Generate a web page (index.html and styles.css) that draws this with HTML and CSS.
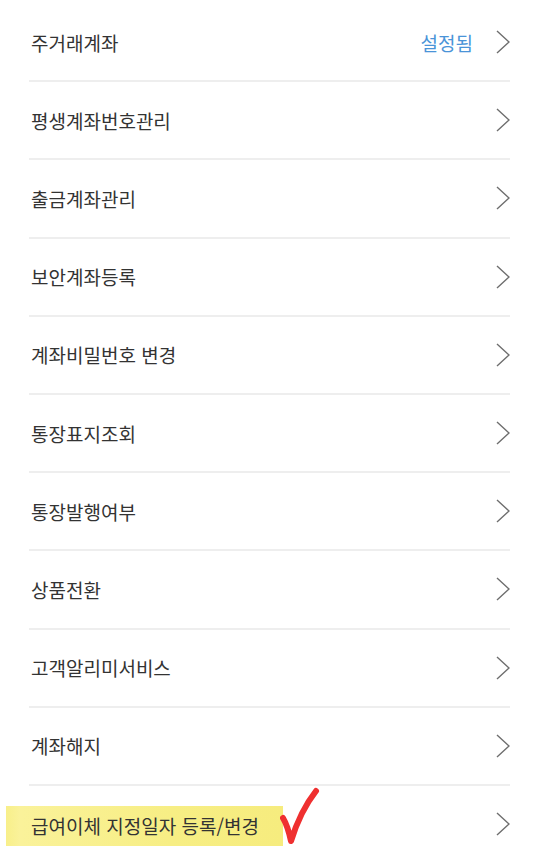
FILE: index.html
```html
<!DOCTYPE html>
<html lang="ko">
<head>
<meta charset="utf-8">
<link rel="stylesheet" href="styles.css">
</head>
<body>
<ul class="menu">
  <li class="row"><span class="label">주거래계좌</span><span class="right"><span class="status">설정됨</span><svg class="chev" viewBox="0 0 14 24"><path d="M1 1 L13 12 L1 23"/></svg></span></li>
  <li class="row"><span class="label">평생계좌번호관리</span><span class="right"><svg class="chev" viewBox="0 0 14 24"><path d="M1 1 L13 12 L1 23"/></svg></span></li>
  <li class="row"><span class="label">출금계좌관리</span><span class="right"><svg class="chev" viewBox="0 0 14 24"><path d="M1 1 L13 12 L1 23"/></svg></span></li>
  <li class="row"><span class="label">보안계좌등록</span><span class="right"><svg class="chev" viewBox="0 0 14 24"><path d="M1 1 L13 12 L1 23"/></svg></span></li>
  <li class="row"><span class="label">계좌비밀번호 변경</span><span class="right"><svg class="chev" viewBox="0 0 14 24"><path d="M1 1 L13 12 L1 23"/></svg></span></li>
  <li class="row"><span class="label">통장표지조회</span><span class="right"><svg class="chev" viewBox="0 0 14 24"><path d="M1 1 L13 12 L1 23"/></svg></span></li>
  <li class="row"><span class="label">통장발행여부</span><span class="right"><svg class="chev" viewBox="0 0 14 24"><path d="M1 1 L13 12 L1 23"/></svg></span></li>
  <li class="row"><span class="label">상품전환</span><span class="right"><svg class="chev" viewBox="0 0 14 24"><path d="M1 1 L13 12 L1 23"/></svg></span></li>
  <li class="row"><span class="label">고객알리미서비스</span><span class="right"><svg class="chev" viewBox="0 0 14 24"><path d="M1 1 L13 12 L1 23"/></svg></span></li>
  <li class="row"><span class="label">계좌해지</span><span class="right"><svg class="chev" viewBox="0 0 14 24"><path d="M1 1 L13 12 L1 23"/></svg></span></li>
  <li class="row last">
    <span class="label marked">급여이체 지정일자 등록/변경</span>
    <svg class="check" viewBox="0 0 40 58"><path d="M3 31 C6 36 9 45 11 54 C16 38 25 18 36 4"/></svg>
    <span class="right"><svg class="chev" viewBox="0 0 14 24"><path d="M1 1 L13 12 L1 23"/></svg></span>
  </li>
</ul>
</body>
</html>
```
FILE: styles.css
```css
html, body {
  margin: 0;
  padding: 0;
  background: #ffffff;
}
body {
  font-family: "Noto Sans CJK KR", "Noto Sans", sans-serif;
  color: #333333;
}
.menu {
  list-style: none;
  margin: 0;
  padding: 4px 30px 0 29px;
}
.row {
  position: relative;
  height: 76.2px;
  border-bottom: 2px solid #eeeeee;
  display: flex;
  align-items: center;
  justify-content: space-between;
}
.row.last {
  border-bottom: none;
}
.label {
  font-size: 19px;
  letter-spacing: 0;
  padding-left: 2px;
  line-height: 1;
}
.right {
  display: flex;
  align-items: center;
  gap: 23px;
  margin-right: 0;
}
.status {
  color: #4a94d8;
  font-size: 19px;
  line-height: 1;
}
.chev {
  width: 14px;
  height: 24px;
  display: block;
}
.chev path {
  fill: none;
  stroke: #6e6e6e;
  stroke-width: 1.4;
}
.marked {
  position: absolute;
  left: -23px;
  top: 20px;
  height: 40px;
  width: 277px;
  box-sizing: border-box;
  padding-left: 25px;
  display: flex;
  align-items: center;
  background: linear-gradient(90deg, #f8ef8a 0%, #faf29a 5%, #f7ee84 60%, #f6ec7e 100%);
  color: #333333;
}
.check {
  position: absolute;
  left: 251px;
  top: 1px;
  width: 40px;
  height: 58px;
}
.check path {
  fill: none;
  stroke: #ef3030;
  stroke-width: 6;
  stroke-linecap: round;
  stroke-linejoin: round;
}
.row.last .right {
  margin-left: auto;
}
```
